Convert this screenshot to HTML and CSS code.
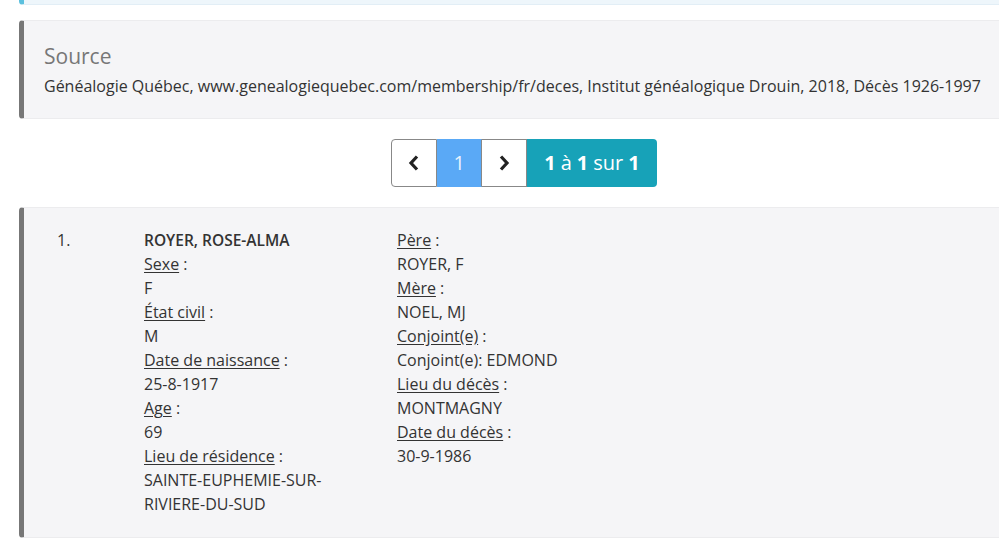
FILE: index.html
```html
<!DOCTYPE html>
<html lang="fr">
<head>
    <meta charset="utf-8">
    <title>Décès 1926-1997 - Résultats</title>
    <link rel="stylesheet" href="styles.css">
</head>
<body>
    <div class="page">
        <div class="callout callout-info"></div>

        <div class="callout">
            <h4>Source</h4>
            <p>Généalogie Québec, www.genealogiequebec.com/membership/fr/deces, Institut généalogique Drouin, 2018, Décès 1926-1997</p>
        </div>

        <div class="pager">
            <a class="pager-btn pager-first" href="#">
                <svg width="14" height="18" viewBox="0 0 14 18"><path d="M10 2.5 L4 9 L10 15.5" fill="none" stroke="#222" stroke-width="3.2"/></svg>
            </a>
            <a class="pager-btn active" href="#">1</a>
            <a class="pager-btn" href="#">
                <svg width="14" height="18" viewBox="0 0 14 18"><path d="M4 2.5 L10 9 L4 15.5" fill="none" stroke="#222" stroke-width="3.2"/></svg>
            </a>
            <span class="pager-count"><b>1</b> à <b>1</b> sur <b>1</b></span>
        </div>

        <div class="callout result">
            <div class="num">1.</div>
            <div class="col">
                <strong>ROYER, ROSE-ALMA</strong>
                <span><u>Sexe</u> :</span>
                <span>F</span>
                <span><u>État civil</u> :</span>
                <span>M</span>
                <span><u>Date de naissance</u> :</span>
                <span>25-8-1917</span>
                <span><u>Age</u> :</span>
                <span>69</span>
                <span><u>Lieu de résidence</u> :</span>
                <span>SAINTE-EUPHEMIE-SUR-<br>RIVIERE-DU-SUD</span>
            </div>
            <div class="col">
                <span><u>Père</u> :</span>
                <span>ROYER, F</span>
                <span><u>Mère</u> :</span>
                <span>NOEL, MJ</span>
                <span><u>Conjoint(e)</u> :</span>
                <span>Conjoint(e): EDMOND</span>
                <span><u>Lieu du décès</u> :</span>
                <span>MONTMAGNY</span>
                <span><u>Date du décès</u> :</span>
                <span>30-9-1986</span>
            </div>
        </div>
    </div>
</body>
</html>
```

FILE: styles.css
```css
html, body { overflow: hidden; }
body { margin: 0; font-family: "Open Sans", "Liberation Sans", sans-serif; font-size: 16px; line-height: 24px; color: #333; background: #fff; }
.page { width: 1010px; padding-left: 19px; }

.callout { background: #f5f5f7; border: 1px solid #ececee; border-left: 5px solid #777; border-radius: 4px 0 0 4px; padding: 20px; margin-bottom: 20px; }
.callout h4 { margin: 0 0 3px; font-size: 21px; font-weight: 400; line-height: 30px; color: #777; }
.callout p { margin: 0; }
.callout-info { background: #eef6fb; border-color: #e2eef6; border-left-color: #5bc0de; height: 24px; padding: 0; margin-top: -21px; margin-bottom: 15px; }

.pager { display: flex; justify-content: center; margin: 0 0 20px; }
.pager-btn { width: 44px; height: 46px; display: flex; align-items: center; justify-content: center; border: 1px solid #888; border-left: 0; background: #fff; color: #333; text-decoration: none; font-size: 20px; }
.pager-first { border-left: 1px solid #888; border-radius: 4px 0 0 4px; }
.pager-btn.active { background: #5aa9f6; border-color: #5aa9f6; border-right-color: #888; color: #e8f2fd; }
.pager-count { height: 48px; padding: 0 17px 0 17px; display: flex; align-items: center; gap: 5px; background: #17a2b8; color: #fff; font-size: 20px; border-radius: 0 4px 4px 0; }
.pager-count b { font-weight: 700; }

.result { display: grid; grid-template-columns: 87px 253px auto; padding: 20px 20px 21px 33px; margin-bottom: 0; }
.result .col { display: flex; flex-direction: column; }
.result strong { font-weight: 600; font-size: 15.5px; }
.result u { text-underline-offset: 2px; }
```
